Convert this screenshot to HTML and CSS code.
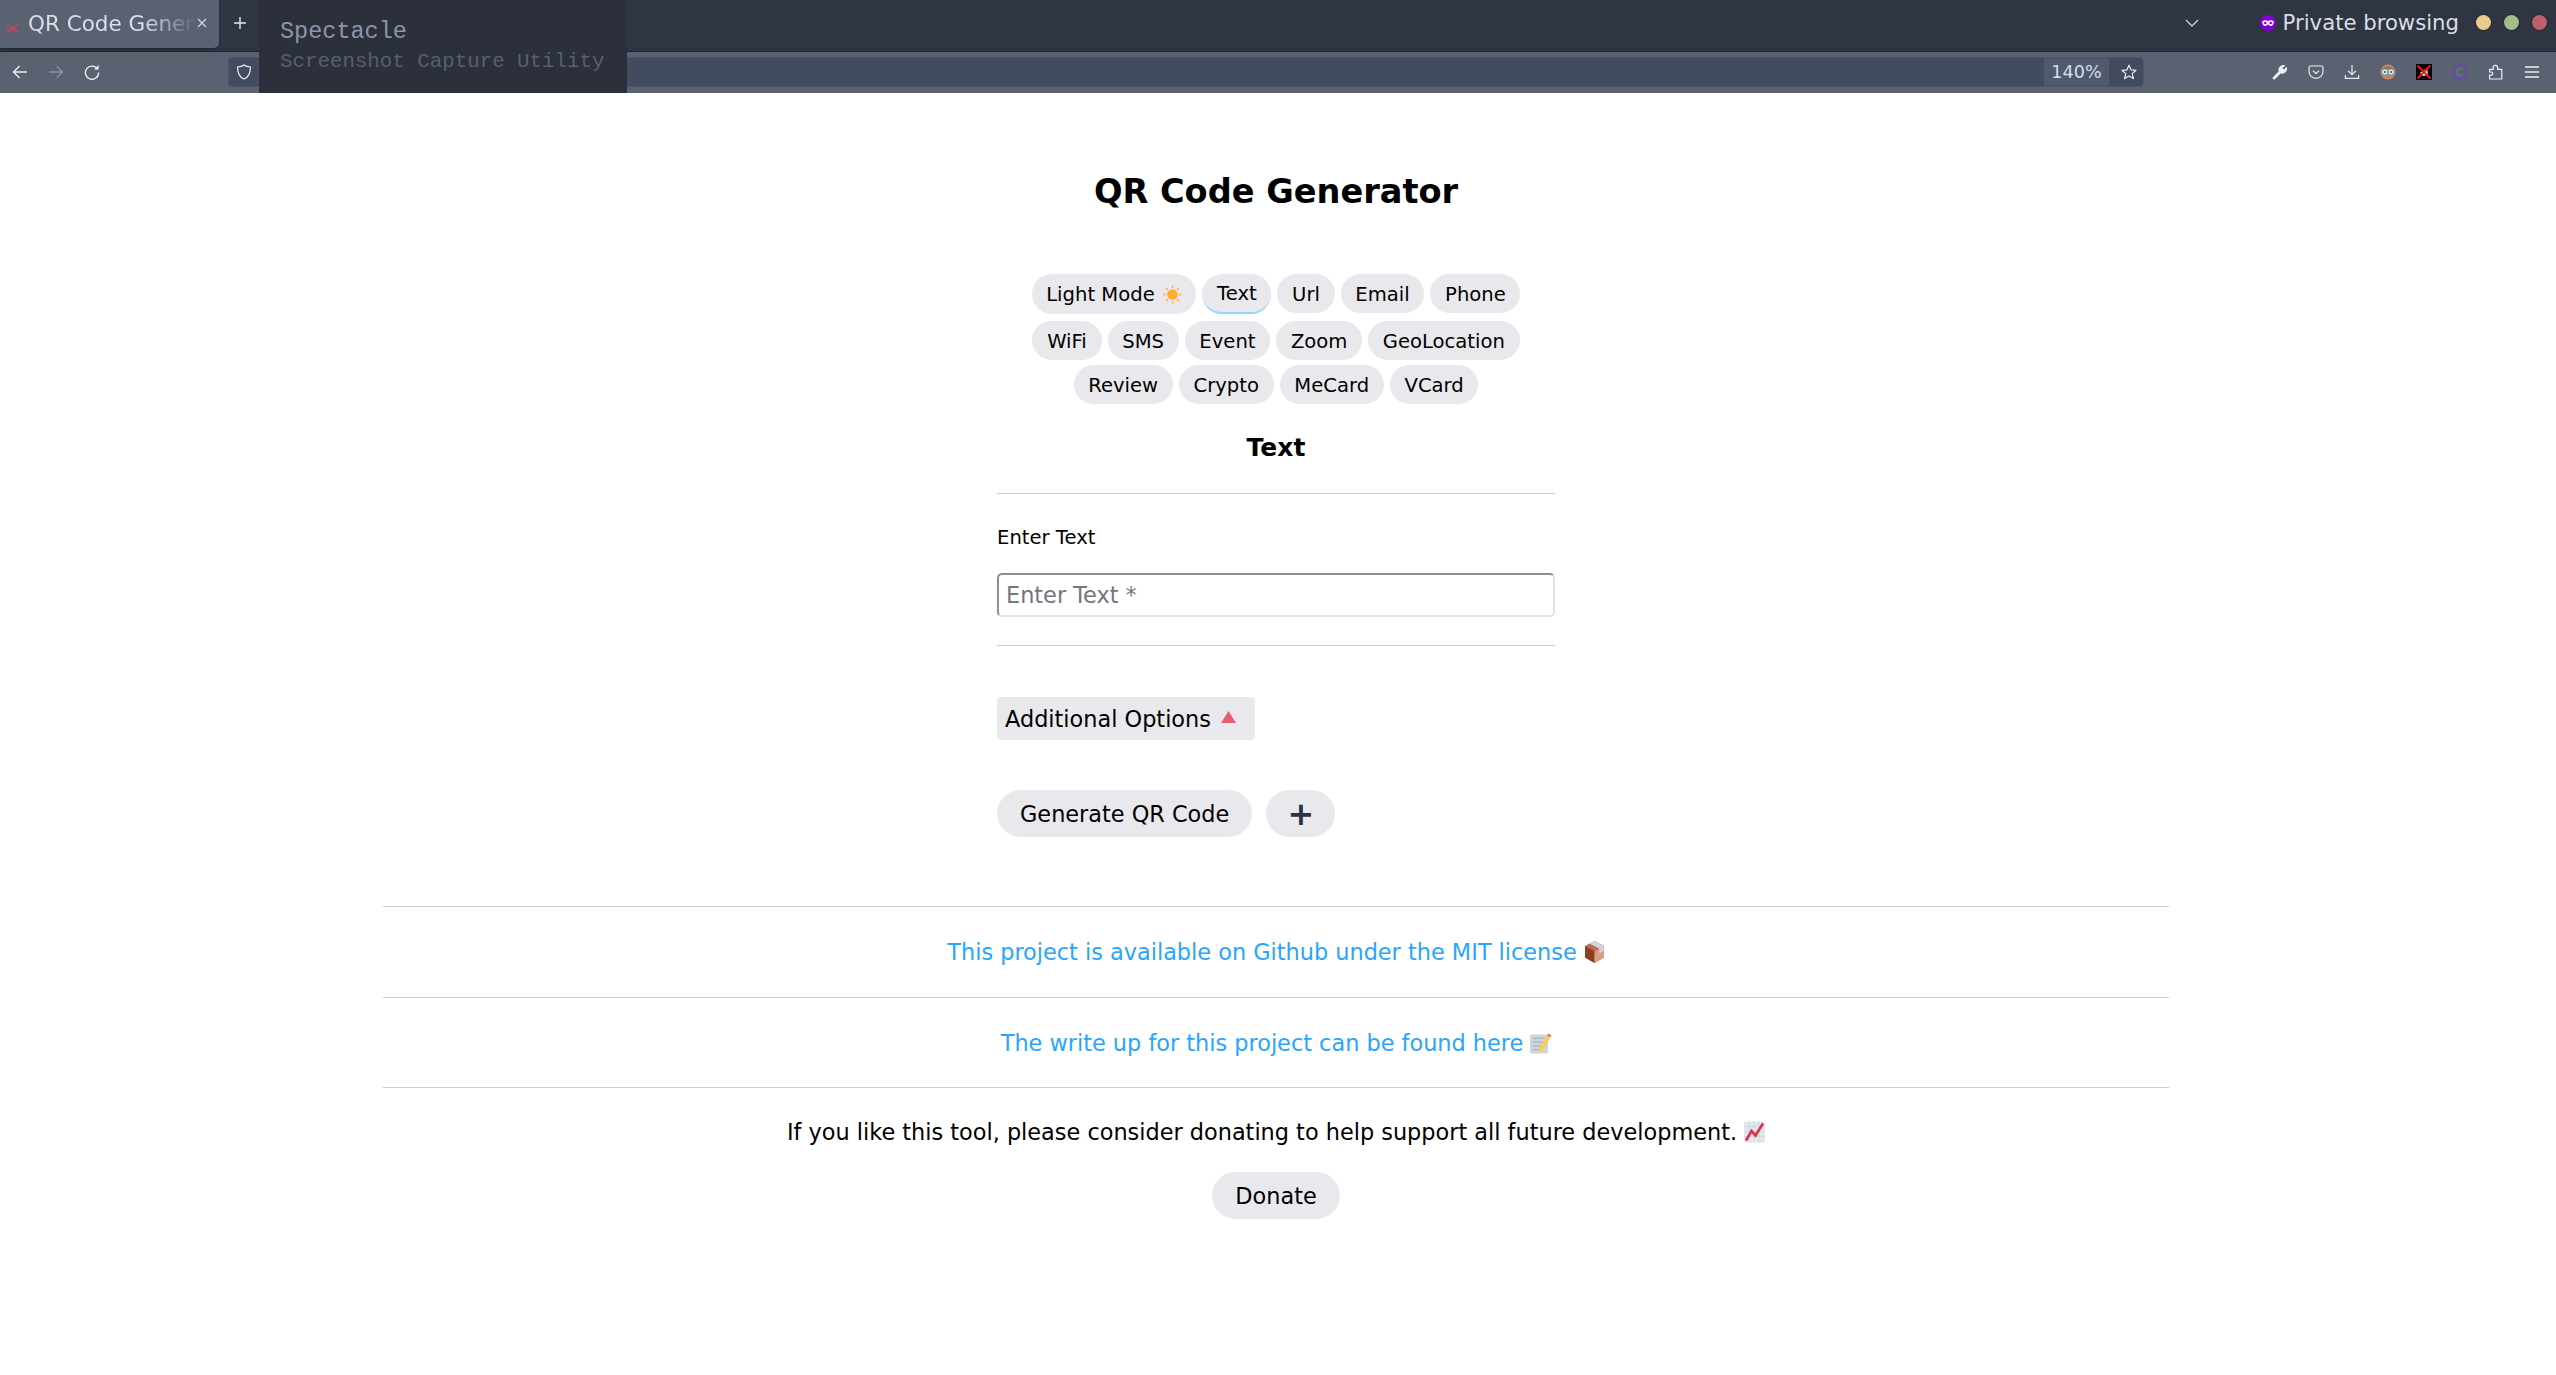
FILE: index.html
```html
<!DOCTYPE html>
<html lang="en">
<head>
<meta charset="utf-8">
<title>QR Code Generator</title>
<link rel="stylesheet" href="styles.css">
</head>
<body>
<header class="chrome">
  <div class="tabbar">
    <div class="tab">
      <svg class="favicon" viewBox="0 0 14 10"><path d="M0 9.5 L13 1 M1 0.5 L14 9.5 M3 9 L11 3 M3 4 L11 9 M0 6 L7 9.5" stroke="#b04a64" stroke-width="1.3" fill="none"/></svg>
      <span class="tab-title">QR Code Generator</span>
      <svg class="tab-close" viewBox="0 0 10 10"><path d="M1 1 L9 9 M9 1 L1 9" stroke="#d8dee9" stroke-width="1.1"/></svg>
    </div>
    <svg class="tab-new" viewBox="0 0 14 14"><path d="M7 1 V13 M1 7 H13" stroke="#e5e9f0" stroke-width="1.4"/></svg>
    <div class="tabbar-right">
      <svg class="tab-list" viewBox="0 0 14 8"><path d="M1 1 L7 7 L13 1" stroke="#c8cfdb" stroke-width="1.3" fill="none"/></svg>
      <svg class="private-icon" viewBox="0 0 16 16"><circle cx="8" cy="8" r="8" fill="#8000d7"/><path d="M2.4 6.2 C4 4.9 6.5 5.1 8 6.2 C9.5 5.1 12 4.9 13.6 6.2 C14 8.8 12.8 11 10.8 11 C9.4 11 8.8 9.6 8 9.6 C7.2 9.6 6.6 11 5.2 11 C3.2 11 2 8.8 2.4 6.2 Z" fill="#fff"/><circle cx="5.3" cy="8" r="1.3" fill="#8000d7"/><circle cx="10.7" cy="8" r="1.3" fill="#8000d7"/></svg>
      <span class="private-label">Private browsing</span>
      <div class="win-buttons">
        <span class="win-dot win-yellow"></span>
        <span class="win-dot win-green"></span>
        <span class="win-dot win-red"></span>
      </div>
    </div>
  </div>
  <div class="toolbar">
    <div class="nav-buttons">
      <span class="tool"><svg viewBox="0 0 16 16"><path d="M15 8 H1.5 M7.5 2 L1.5 8 L7.5 14" stroke="#eceff4" stroke-width="1.3" fill="none"/></svg></span>
      <span class="tool"><svg viewBox="0 0 16 16"><path d="M1 8 H14.5 M8.5 2 L14.5 8 L8.5 14" stroke="#8b92a0" stroke-width="1.3" fill="none"/></svg></span>
      <span class="tool"><svg viewBox="0 0 16 16"><path d="M13.6 5.2 A6.6 6.6 0 1 0 14.6 8.6" stroke="#eceff4" stroke-width="1.4" fill="none"/><path d="M10 5.6 H14.6 V1 Z" fill="#eceff4"/></svg></span>
    </div>
    <div class="urlbar">
      <span class="shield-box"><svg viewBox="0 0 16 16"><path d="M8 1 C10 2.4 12 2.8 14.4 3 C14.6 8.6 12.6 13 8 15 C3.4 13 1.4 8.6 1.6 3 C4 2.8 6 2.4 8 1 Z" stroke="#eceff4" stroke-width="1.2" fill="none"/></svg></span>
      <div class="url-right">
        <span class="zoom-level">140%</span>
        <span class="star"><svg viewBox="0 0 16 16"><path d="M8 1.2 L10 5.8 L15 6.3 L11.2 9.6 L12.4 14.6 L8 12 L3.6 14.6 L4.8 9.6 L1 6.3 L6 5.8 Z" stroke="#eceff4" stroke-width="1.2" stroke-linejoin="round" fill="none"/></svg></span>
      </div>
    </div>
    <div class="tools">
      <span class="tool"><svg viewBox="0 0 16 16"><path d="M0.6 13.4 L6.6 7.6 C5.6 4 8.4 0.4 12.6 1 L13.4 1.3 L10.4 4.2 L11.8 5.6 L14.8 2.8 C16.2 7 12.4 10.8 8.6 9.6 L2.6 15.4 C1.4 15.6 0.4 14.6 0.6 13.4 Z" fill="#eceff4"/></svg></span>
      <span class="tool"><svg viewBox="0 0 16 16"><path d="M2.4 2 H13.6 A1.4 1.4 0 0 1 15 3.4 V7.5 C15 11.4 11.8 14.4 8 14.4 C4.2 14.4 1 11.4 1 7.5 V3.4 A1.4 1.4 0 0 1 2.4 2 Z" stroke="#eceff4" stroke-width="1.2" fill="none"/><path d="M5 6.6 L8 9.6 L11 6.6" stroke="#eceff4" stroke-width="1.3" fill="none"/></svg></span>
      <span class="tool"><svg viewBox="0 0 16 16"><path d="M8 1 V10.4 M4 6.6 L8 10.6 L12 6.6 M1.4 11 V14.4 H14.6 V11" stroke="#eceff4" stroke-width="1.2" fill="none"/></svg></span>
      <span class="tool"><svg viewBox="0 0 16 16"><circle cx="8" cy="8" r="7.6" fill="#c08a62"/><path d="M2 6 C3 1.2 13 1.2 14 6 C11 4.4 5 4.4 2 6 Z" fill="#8d6e58"/><circle cx="4.8" cy="8" r="3" fill="#eaf3f4" stroke="#5f9fb0"/><circle cx="11.2" cy="8" r="3" fill="#eaf3f4" stroke="#5f9fb0"/><circle cx="4.8" cy="8" r="1.1" fill="#3b4252"/><circle cx="11.2" cy="8" r="1.1" fill="#3b4252"/><path d="M5.6 13 H10.4" stroke="#d9744f" stroke-width="1.3"/></svg></span>
      <span class="tool"><svg viewBox="0 0 16 16"><rect width="16" height="16" fill="#000"/><path d="M4 9 L11 4 L12 11 L7 12 Z" fill="#e8e8e8"/><path d="M1.5 1.5 L14.5 14.5 M14.5 1.5 L1.5 14.5" stroke="#f2121f" stroke-width="1.8"/></svg></span>
      <span class="tool"><svg viewBox="0 0 16 16"><circle cx="8" cy="8" r="7" stroke="#6c3fc4" stroke-width="1.4" fill="none"/><path d="M10.8 5.6 A3.6 3.6 0 1 0 10.8 10.4" stroke="#6b7282" stroke-width="1.6" fill="none"/></svg></span>
      <span class="tool"><svg viewBox="0 0 16 16"><path d="M1.6 5.4 H5.2 V3.4 C5.2 0.6 9.6 0.6 9.6 3.4 V5.4 H13.8 V15 H1.6 V11.2 H3.2 C5.4 11.2 5.4 8 3.2 8 H1.6 Z" stroke="#eceff4" stroke-width="1.2" stroke-linejoin="round" fill="none"/></svg></span>
      <span class="tool"><svg viewBox="0 0 16 16"><path d="M1 3 H15 M1 8 H15 M1 13 H15" stroke="#eceff4" stroke-width="1.3"/></svg></span>
    </div>
  </div>
  <div class="launcher">
    <div class="launcher-name">Spectacle</div>
    <div class="launcher-desc">Screenshot Capture Utility</div>
  </div>
</header>

<main class="page">
  <h1 class="title">QR Code Generator</h1>

  <nav class="pills">
    <div class="pill-row">
      <button class="pill pill-tall">Light Mode <svg class="emoji-sun" viewBox="0 0 20 20"><circle cx="10" cy="10" r="5.6" fill="#ffac33"/><path d="M10 0.5 V3 M10 17 V19.5 M0.5 10 H3 M17 10 H19.5 M3.3 3.3 L5 5 M15 15 L16.7 16.7 M3.3 16.7 L5 15 M15 5 L16.7 3.3" stroke="#ffac33" stroke-width="1.7"/></svg></button>
      <button class="pill pill-active">Text</button>
      <button class="pill">Url</button>
      <button class="pill">Email</button>
      <button class="pill">Phone</button>
    </div>
    <div class="pill-row pill-row-second">
      <button class="pill">WiFi</button>
      <button class="pill">SMS</button>
      <button class="pill">Event</button>
      <button class="pill">Zoom</button>
      <button class="pill">GeoLocation</button>
    </div>
    <div class="pill-row pill-row-third">
      <button class="pill">Review</button>
      <button class="pill">Crypto</button>
      <button class="pill">MeCard</button>
      <button class="pill">VCard</button>
    </div>
  </nav>

  <h2 class="subtitle">Text</h2>

  <form class="form">
    <hr class="rule rule-form-top">
    <label class="field-label" for="text-input">Enter Text</label>
    <input class="field-input" id="text-input" type="text" placeholder="Enter Text *">
    <hr class="rule rule-form-bottom">
    <button class="options" type="button">Additional Options <svg class="triangle" viewBox="0 0 15 12"><path d="M7.5 0 L15 12 H0 Z" fill="#e85d75"/></svg></button>
    <div class="actions">
      <button class="action" type="button">Generate QR Code</button>
      <button class="action action-plus" type="button">+</button>
    </div>
  </form>

  <footer class="footer">
    <hr class="rule">
    <p class="line"><a class="link" href="#">This project is available on Github under the MIT license</a> <svg class="emoji" viewBox="0 0 20 22"><path d="M10 0 L19.5 5 V16.5 L10 22 L0.5 16.5 V5 Z" fill="#c1694f"/><path d="M0.5 5 L10 10.5 V22 L0.5 16.5 Z" fill="#8a3f24"/><path d="M10 10.5 L19.5 5 V16.5 L10 22 Z" fill="#d99e82"/><path d="M5 2.4 L14.8 7.8 V12.4 L19 9.8 V5 L10 0 Z" fill="#ccd6dd"/></svg></p>
    <hr class="rule">
    <p class="line line-writeup"><a class="link" href="#">The write up for this project can be found here</a> <svg class="emoji" viewBox="0 0 22 22"><rect y="2" width="19" height="20" rx="1.5" fill="#ccd6dd"/><path d="M3 6 H15 M3 10 H15 M3 14 H12 M3 18 H12" stroke="#99aab5" stroke-width="1"/><path d="M9 18 L18 3 L21.5 5 L12.5 20 L8.5 21.5 Z" fill="#ffcc4d"/><path d="M18 3 L19 1 L22 3 L21.5 5 Z" fill="#ea596e"/></svg></p>
    <hr class="rule">
    <p class="line line-donate">If you like this tool, please consider donating to help support all future development. <svg class="emoji" viewBox="0 0 21 21"><rect width="21" height="21" rx="1.5" fill="#e1e8ed"/><path d="M5 0 V21 M10 0 V21 M15 0 V21 M0 5 H21 M0 10 H21 M0 15 H21" stroke="#ccd6dd" stroke-width="0.8"/><path d="M2 19 L7.5 9.5 L11.5 14 L19 2" stroke="#dd2e44" stroke-width="2.6" fill="none"/></svg></p>
    <button class="action" type="button">Donate</button>
  </footer>
</main>
</body>
</html>
```

FILE: styles.css
```css
* { box-sizing: border-box; }

html, body { margin: 0; padding: 0; background: #fff; }

body {
  font-family: "DejaVu Sans", sans-serif;
  color: #000;
  height: 1375px;
  overflow: hidden;
}

/* browser chrome */
.chrome { position: relative; height: 93px; background: #5a6170; }

.tabbar {
  height: 52px;
  background: #2f3541;
  border-bottom: 1px solid #1f232c;
  display: flex;
  align-items: flex-start;
}

.tab {
  width: 219px;
  height: 46px;
  background: #5a6170;
  border-radius: 0 0 5px 0;
  display: flex;
  align-items: center;
  padding-left: 6px;
  box-shadow: 0 2px 0 #5a6170, 0 3px 2px rgba(0, 0, 0, 0.3);
}

.favicon { width: 14px; height: 10px; flex: none; margin-top: 10px; }

.tab-title {
  width: 170px;
  margin-left: 8px;
  font-size: 21.5px;
  color: #d8dee9;
  white-space: nowrap;
  overflow: hidden;
  -webkit-mask-image: linear-gradient(to right, #000 68%, transparent 100%);
  mask-image: linear-gradient(to right, #000 68%, transparent 100%);
}

.tab-close { width: 10px; height: 10px; flex: none; margin-left: -1px; }

.tab-new { width: 14px; height: 14px; margin: 16px 0 0 14px; flex: none; }

.tabbar-right {
  margin-left: auto;
  display: flex;
  align-items: center;
  height: 45px;
  padding-right: 9px;
}

.tab-list { width: 14px; height: 8px; margin-right: 61px; }

.private-icon { width: 16px; height: 16px; flex: none; }

.private-label { font-size: 21.2px; color: #d8dee9; margin-left: 7px; }

.win-buttons { display: flex; gap: 13px; margin-left: 17px; }

.win-dot {
  width: 15px;
  height: 15px;
  border-radius: 50%;
  box-shadow: 0 0 1px 1px rgba(0, 0, 0, 0.2);
}

.win-yellow { background: #ebcb8b; }
.win-green { background: #a3be8c; }
.win-red { background: #bf616a; }

.toolbar {
  height: 41px;
  padding: 0 6px 1px 2px;
  display: flex;
  align-items: center;
}

.nav-buttons, .tools { display: flex; flex: none; }

.tool {
  width: 36px;
  height: 36px;
  display: flex;
  align-items: center;
  justify-content: center;
}

.tool svg { width: 16px; height: 16px; display: block; }

.urlbar {
  flex: 1;
  height: 30px;
  margin: 0 118px;
  background: #434c5e;
  border: 1px solid #4c566a;
  border-radius: 5px;
  display: flex;
  align-items: center;
  justify-content: space-between;
}

.shield-box {
  width: 30px;
  height: 28px;
  background: #434c5e;
  display: flex;
  align-items: center;
  justify-content: center;
}

.shield-box svg { width: 16px; height: 16px; }

.url-right { display: flex; align-items: center; }

.zoom-level {
  width: 65px;
  height: 28px;
  background: #505a6d;
  border-radius: 4px;
  color: #d8dee9;
  font-size: 17.6px;
  display: flex;
  align-items: center;
  justify-content: center;
}

.star {
  width: 34px;
  height: 28px;
  padding-left: 6px;
  display: flex;
  align-items: center;
  justify-content: center;
}

.star svg { width: 16px; height: 16px; }

.launcher {
  position: absolute;
  left: 259px;
  top: 0;
  width: 368px;
  height: 93px;
  background: #2b303b;
  padding: 18px 0 0 21px;
  font-family: "Liberation Mono", monospace;
}

.launcher-name { font-size: 23.5px; line-height: 28px; color: #8b96a8; }

.launcher-desc { font-size: 20.8px; line-height: 28px; margin-top: 2px; color: #566170; }

/* page */
.page { padding: 79px 4px 0 0; }

.title {
  margin: 0;
  font-size: 33.6px;
  line-height: 40px;
  text-align: center;
  font-weight: 700;
}

.pills { margin-top: 62px; display: flex; flex-direction: column; }

.pill-row { display: flex; justify-content: center; gap: 6px; align-items: flex-start; }
.pill-row-second { margin-top: 7px; }
.pill-row-third { margin-top: 5px; }

.pill {
  height: 39px;
  padding: 1px 14.7px 0;
  border: 0;
  border-radius: 20px;
  background: #e9e9ed;
  color: #000;
  font-family: inherit;
  font-size: 19.6px;
}

.pill-tall { height: 40px; display: flex; align-items: center; gap: 8px; }

.pill-active { height: 40px; border-bottom: 2px solid #8fd6ff; }

.emoji-sun { width: 19px; height: 19px; }

.subtitle {
  margin: 29px 0 0;
  font-size: 25px;
  line-height: 30px;
  text-align: center;
  font-weight: 700;
}

.form { width: 558px; margin: 0 auto; }

.rule { border: 0; border-top: 1px solid #ccc; margin: 0; height: 0; }

.rule-form-top { margin-top: 30px; }

.field-label {
  display: block;
  margin-top: 32px;
  font-size: 19.6px;
  line-height: 24px;
}

.field-input {
  display: block;
  width: 100%;
  height: 44px;
  margin-top: 23px;
  padding: 0 7px;
  border: 2px solid;
  border-color: #8f8f8f #e3e3e3 #e3e3e3 #8f8f8f;
  border-radius: 5px;
  font-family: inherit;
  font-size: 22.4px;
  background: #fff;
}

.field-input::placeholder { color: #75757e; opacity: 1; }

.rule-form-bottom { margin-top: 28px; }

.options {
  display: flex;
  align-items: center;
  gap: 10px;
  height: 43px;
  margin-top: 51px;
  padding: 0 19px 0 8px;
  border: 0;
  border-radius: 4px;
  background: #e9e9ed;
  color: #000;
  font-family: inherit;
  font-size: 22.4px;
}

.triangle { width: 15px; height: 12px; margin: -4px 0 0 0; }

.actions { display: flex; gap: 14px; margin-top: 50px; }

.action {
  height: 47px;
  padding: 0 23px;
  border: 0;
  border-radius: 24px;
  background: #e9e9ed;
  color: #000;
  font-family: inherit;
  font-size: 22.4px;
}

.action-plus { width: 69px; padding: 0; font-size: 32px; font-weight: 700; color: #2e3440; }

.footer { width: 1786px; margin: 69px auto 0; display: flex; flex-direction: column; align-items: center; }

.footer .rule { width: 100%; }

.line {
  margin: 0;
  height: 90px;
  width: 100%;
  display: flex;
  align-items: center;
  justify-content: center;
  gap: 7px;
  font-size: 22.4px;
}

.line-writeup { height: 89px; }

.line-donate { height: 84px; padding-top: 3px; }

.link { color: #2aa5ff; text-decoration: none; }

.emoji { height: 22px; width: 21px; flex: none; }
```
